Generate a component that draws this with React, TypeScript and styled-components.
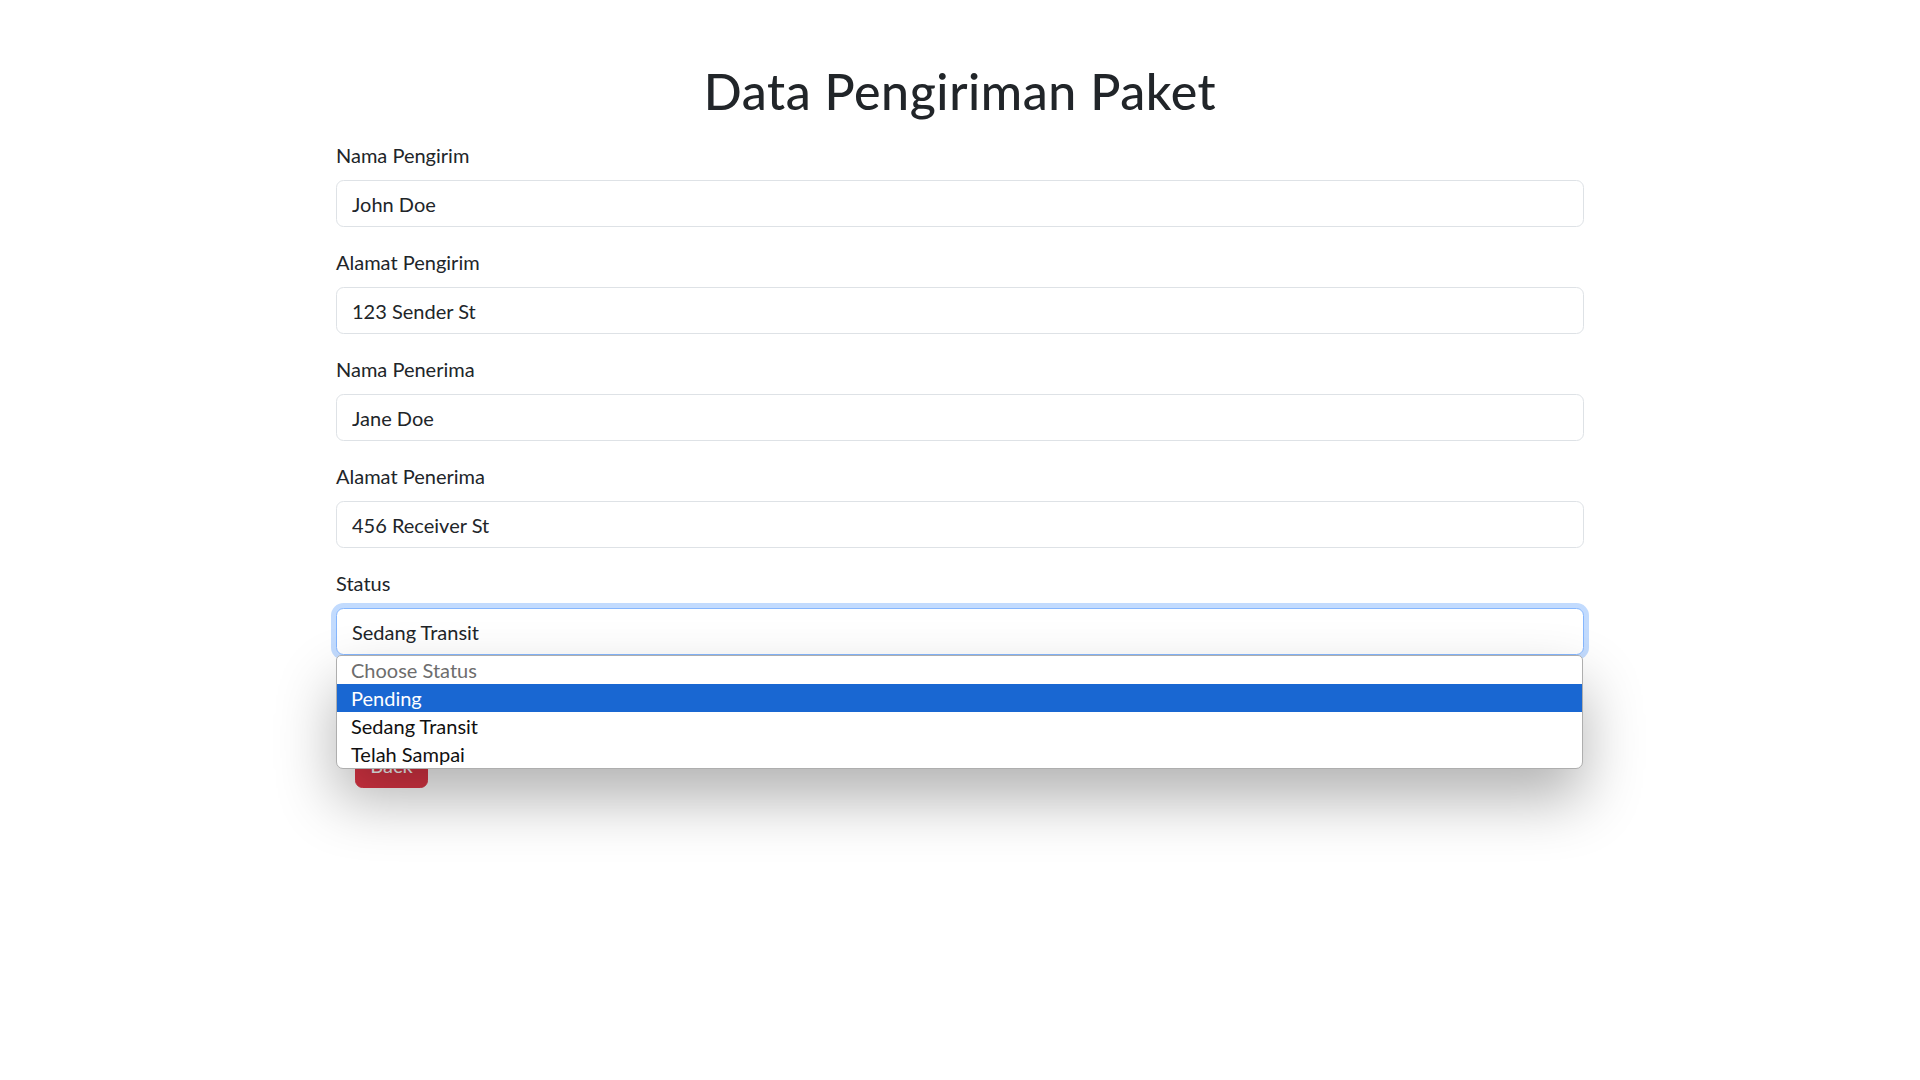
import React from "react";
import styled, { createGlobalStyle } from "styled-components";

const Global = createGlobalStyle`
  html, body { margin: 0; padding: 0; background: #ffffff; }
  body {
    font-family: Lato, "Noto Sans", "Liberation Sans", sans-serif;
    color: #212529;
  }
  * { box-sizing: border-box; }
`;

const Page = styled.main`
  padding-top: 61px;
  min-height: 1080px;
`;

const Container = styled.div`
  width: 1248px;
  margin: 0 auto;
`;

const Title = styled.h1`
  margin: 0 0 19px;
  font-size: 50px;
  font-weight: 500;
  line-height: 60px;
  letter-spacing: 0.6px;
  text-align: center;
  color: #212529;
`;

const Field = styled.div`
  margin-bottom: 20px;
`;

const Label = styled.label`
  display: block;
  margin-bottom: 10px;
  font-size: 20px;
  line-height: 30px;
  color: #212529;
`;

const TextInput = styled.input`
  display: block;
  width: 100%;
  height: 47px;
  padding: 7.5px 15px;
  font-family: inherit;
  font-size: 20px;
  line-height: 30px;
  color: #212529;
  background: #ffffff;
  border: 1px solid #dee2e6;
  border-radius: 7.5px;
  outline: none;
`;

const SelectWrap = styled.div`
  position: relative;
`;

const SelectBox = styled.div<{ $focused?: boolean }>`
  height: 47px;
  padding: 7.5px 15px;
  font-size: 20px;
  line-height: 30px;
  color: #212529;
  background: #ffffff;
  border: 1px solid ${(p) => (p.$focused ? "#86b7fe" : "#dee2e6")};
  border-radius: 7.5px;
  box-shadow: ${(p) => (p.$focused ? "0 0 0 5px rgba(13, 110, 253, 0.25)" : "none")};
`;

const Popup = styled.ul`
  position: absolute;
  top: 100%;
  left: 0;
  right: 1px;
  z-index: 10;
  margin: 0;
  padding: 0;
  list-style: none;
  background: #ffffff;
  border: 1px solid #aeaeae;
  border-radius: 5px 5px 7px 7px;
  box-shadow: 0 30px 60px rgba(0, 0, 0, 0.3);
  overflow: hidden;
`;

const Option = styled.li<{ $active?: boolean; $disabled?: boolean }>`
  height: 28px;
  padding: 0 14px;
  font-size: 20px;
  line-height: 28px;
  background: ${(p) => (p.$active ? "#1967d2" : "transparent")};
  color: ${(p) => (p.$active ? "#ffffff" : p.$disabled ? "#6d6d6d" : "#101010")};
`;

const Actions = styled.div`
  display: flex;
  flex-direction: column;
  align-items: flex-start;
`;

const Button = styled.button<{ $variant: "success" | "danger" }>`
  height: 47px;
  padding: 7.5px 15px;
  font-family: inherit;
  font-size: 20px;
  line-height: 30px;
  color: #ffffff;
  background: ${(p) => (p.$variant === "success" ? "#198754" : "#dc3545")};
  border: 1px solid ${(p) => (p.$variant === "success" ? "#198754" : "#dc3545")};
  border-radius: 7.5px;
`;

const BackButton = styled(Button)`
  margin-top: 19px;
  margin-left: 19px;
  width: 73px;
  padding: 7.5px 0;
`;

const fields = [
  { label: "Nama Pengirim", value: "John Doe" },
  { label: "Alamat Pengirim", value: "123 Sender St" },
  { label: "Nama Penerima", value: "Jane Doe" },
  { label: "Alamat Penerima", value: "456 Receiver St" },
];

const options = [
  { text: "Choose Status", disabled: true },
  { text: "Pending", active: true },
  { text: "Sedang Transit" },
  { text: "Telah Sampai" },
];

export default function App() {
  return (
    <>
      <Global />
      <Page>
        <Container>
          <Title>Data Pengiriman Paket</Title>
          {fields.map((f) => (
            <Field key={f.label}>
              <Label>{f.label}</Label>
              <TextInput defaultValue={f.value} />
            </Field>
          ))}
          <Field>
            <Label>Status</Label>
            <SelectWrap>
              <SelectBox $focused>Sedang Transit</SelectBox>
              <Popup>
                {options.map((o) => (
                  <Option key={o.text} $active={o.active} $disabled={o.disabled}>
                    {o.text}
                  </Option>
                ))}
              </Popup>
            </SelectWrap>
          </Field>
          <Actions>
            <Button $variant="success">Update</Button>
            <BackButton $variant="danger">Back</BackButton>
          </Actions>
        </Container>
      </Page>
    </>
  );
}
